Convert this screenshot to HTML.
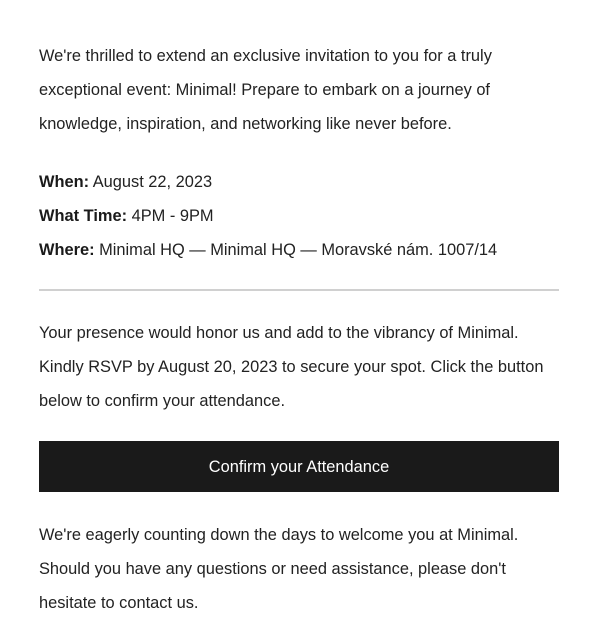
<!DOCTYPE html>
<html><head><style>
body{margin:0;width:600px;height:600px;overflow:hidden;background:#fff;font-family:"Liberation Sans",Arial,sans-serif;color:#222;font-size:16.4px;}
.p{position:absolute;left:39px;width:525px;line-height:34px;margin:0;}
b{color:#1a1a1a}
.hr{position:absolute;left:39px;width:520px;top:289px;height:2px;background:#d0d0d0}
.btn{position:absolute;left:39px;width:520px;top:441px;height:51px;background:#1a1a1a;color:#fff;text-align:center;line-height:52px;font-size:16.4px}
</style></head><body>
<p class="p" style="top:39px">We're thrilled to extend an exclusive invitation to you for a truly exceptional event: Minimal! Prepare to embark on a journey of knowledge, inspiration, and networking like never before.</p>
<p class="p" style="top:165px"><b>When:</b> August 22, 2023<br><b>What Time:</b> 4PM - 9PM<br><b>Where:</b> Minimal HQ — Minimal HQ — Moravské nám. 1007/14</p>
<div class="hr"></div>
<p class="p" style="top:316px">Your presence would honor us and add to the vibrancy of Minimal. Kindly RSVP by August 20, 2023 to secure your spot. Click the button below to confirm your attendance.</p>
<div class="btn">Confirm your Attendance</div>
<p class="p" style="top:518px">We're eagerly counting down the days to welcome you at Minimal. Should you have any questions or need assistance, please don't hesitate to contact us.</p>
</body></html>
